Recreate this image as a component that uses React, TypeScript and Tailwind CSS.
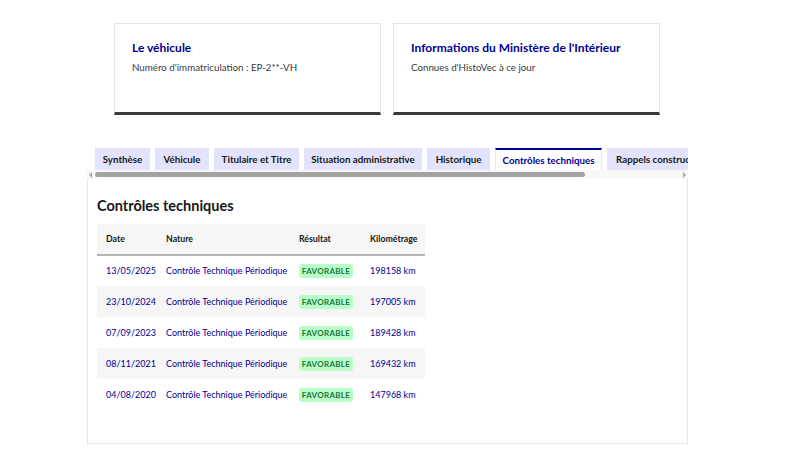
const rows = [
  { date: "13/05/2025", km: "198158 km" },
  { date: "23/10/2024", km: "197005 km" },
  { date: "07/09/2023", km: "189428 km" },
  { date: "08/11/2021", km: "169432 km" },
  { date: "04/08/2020", km: "147968 km" },
];

const tabs = [
  { label: "Synthèse", w: "w-[55px]" },
  { label: "Véhicule", w: "w-[54px]" },
  { label: "Titulaire et Titre", w: "w-[85px]" },
  { label: "Situation administrative", w: "w-[118px]" },
  { label: "Historique", w: "w-[63px]" },
  { label: "Contrôles techniques", w: "w-[107px]", active: true },
  { label: "Rappels constructeur", w: "w-[110px]" },
];

export default function App() {
  return (
    <div className="h-[449px] w-[800px] overflow-hidden bg-white font-['Lato','Noto_Sans',sans-serif] text-[#161616]">
      <div className="flex gap-[12px] pl-[114px] pt-[23px]">
        <InfoCard title="Le véhicule" text="Numéro d'immatriculation : EP-2**-VH" />
        <InfoCard title="Informations du Ministère de l'Intérieur" text="Connues d'HistoVec à ce jour" />
      </div>

      <div className="ml-[87px] mt-[33px] w-[601px]">
        <div className="flex gap-[5px] overflow-hidden pl-[8px]">
          {tabs.map((t) => (
            <div
              key={t.label}
              className={`${t.w} flex h-[22px] shrink-0 items-center justify-center whitespace-nowrap text-[9.75px] font-bold ${
                t.active
                  ? "border-x border-t-2 border-x-[#e5e5e5] border-t-[#000091] bg-white text-[#000091]"
                  : "bg-[#e3e3fd] text-[#161616]"
              }`}
            >
              {t.label}
            </div>
          ))}
        </div>

        <div className="flex h-[9px] items-center bg-[#f8f8f8] px-[2px]">
          <span className="h-0 w-0 border-y-[3px] border-r-[3px] border-y-transparent border-r-[#a3a3a3]" />
          <span className="ml-[3px] h-[5px] w-[490px] rounded-full bg-[#a3a3a3]" />
          <span className="ml-auto h-0 w-0 border-y-[3px] border-l-[3px] border-y-transparent border-l-[#a3a3a3]" />
        </div>

        <div className="h-[265px] border border-t-0 border-[#e5e5e5] pl-[9px] pt-[17px]">
          <h2 className="text-[14.5px] font-bold leading-[20px] text-[#161616]">Contrôles techniques</h2>
          <table className="mt-[8px] w-[328px] table-fixed border-collapse whitespace-nowrap text-left text-[9px]">
            <thead>
              <tr className="h-[31px] border-b-2 border-[#b5b5b5] bg-[#f6f6f6] text-[8.75px]">
                <th className="w-[60px] pl-[9px] font-bold">Date</th>
                <th className="w-[133px] pl-[9px] font-bold">Nature</th>
                <th className="w-[71px] pl-[9px] font-bold">Résultat</th>
                <th className="pl-[9px] font-bold">Kilométrage</th>
              </tr>
            </thead>
            <tbody>
              {rows.map((r, i) => (
                <tr key={r.date} className={`h-[31px] text-[#000091] ${i % 2 === 1 ? "bg-[#f6f6f6]" : "bg-white"}`}>
                  <td className="pl-[9px]">{r.date}</td>
                  <td className="pl-[9px]">Contrôle Technique Périodique</td>
                  <td className="pl-[9px] align-middle">
                    <span className="flex h-[14px] w-[54px] items-center justify-center rounded-[3px] bg-[#b8fec9] text-[8px] font-bold leading-none tracking-[0.3px] text-[#18753c]">
                      FAVORABLE
                    </span>
                  </td>
                  <td className="pl-[9px]">{r.km}</td>
                </tr>
              ))}
            </tbody>
          </table>
        </div>
      </div>
    </div>
  );
}

function InfoCard({ title, text }: { title: string; text: string }) {
  return (
    <div className="h-[92px] w-[267px] border border-b-[3px] border-[#e5e5e5] border-b-[#3a3a3a] px-[17px] pt-[15px]">
      <p className="text-[12px] font-bold leading-[18px] text-[#000091]">{title}</p>
      <p className="mt-[3px] text-[9.75px] leading-[15px] text-[#3a3a3a]">{text}</p>
    </div>
  );
}
